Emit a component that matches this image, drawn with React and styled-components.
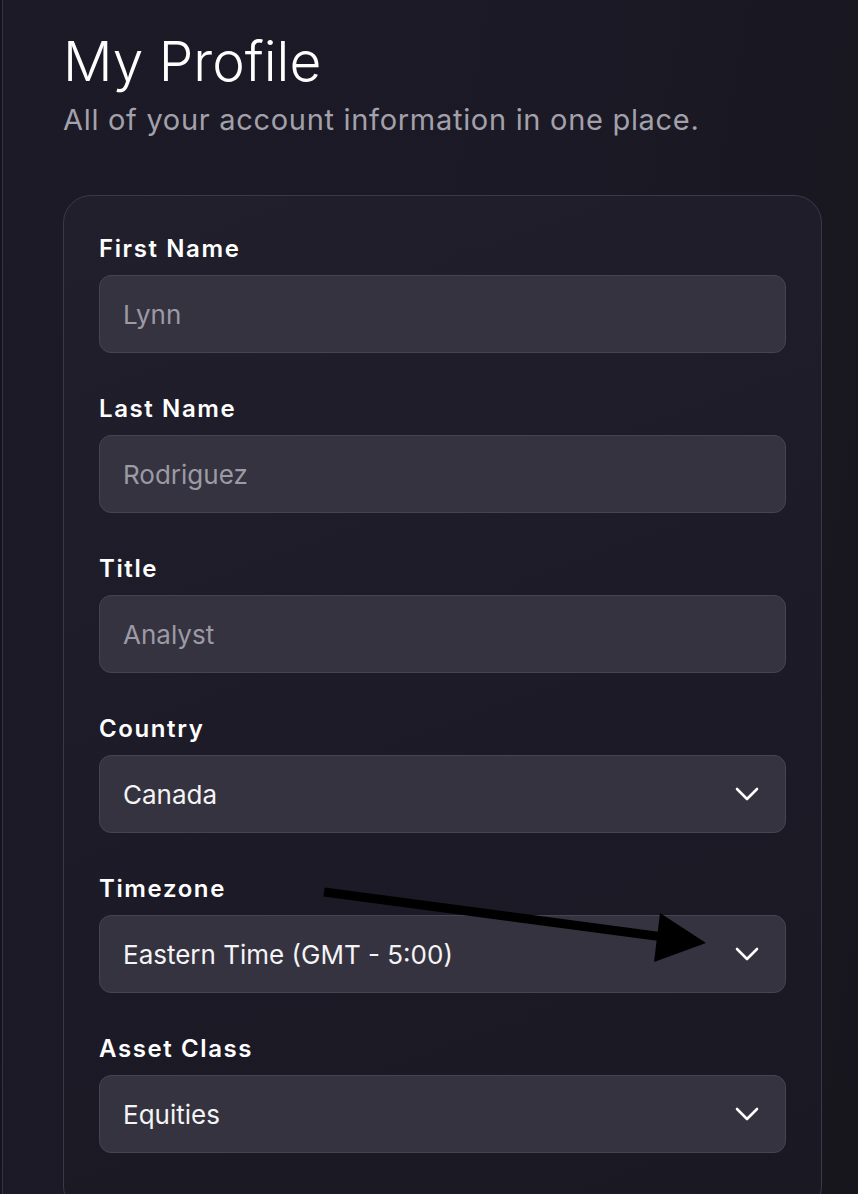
import React from "react";
import styled, { createGlobalStyle } from "styled-components";

const GlobalStyle = createGlobalStyle`
    html, body {
        margin: 0;
        padding: 0;
        background: #15141b;
    }
    body {
        font-family: Inter, "Noto Sans", sans-serif;
        -webkit-font-smoothing: antialiased;
    }
`

const Page = styled.div`
    position: relative;
    min-height: 1194px;
    margin-left: 2px;
    border-left: 1px solid #353341;
    background: linear-gradient(100deg, #1c1a27 0%, #1b1925 55%, #17161d 100%);
    padding: 28px 36px 0 60px;
    box-sizing: border-box;
`

const Title = styled.h1`
    margin: 0;
    font-size: 55px;
    font-weight: 300;
    line-height: 66px;
    color: #ffffff;
`

const Subtitle = styled.p`
    margin: 8px 0 0;
    font-size: 29px;
    font-weight: 400;
    line-height: 36px;
    letter-spacing: 0.7px;
    color: #a3a1aa;
`

const Card = styled.div`
    margin-top: 57px;
    border: 1px solid #3b3947;
    border-radius: 28px;
    background: linear-gradient(160deg, #211f2c 0%, #1c1a26 60%, #1a1822 100%);
    padding: 38px 35px 60px;
    display: flex;
    flex-direction: column;
    gap: 41px;
`

const Field = styled.div`
    display: flex;
    flex-direction: column;
    gap: 11px;
`

const Label = styled.label`
    font-size: 24px;
    font-weight: 600;
    line-height: 30px;
    letter-spacing: 1.6px;
    color: #ffffff;
`

const Box = styled.div`
    height: 78px;
    box-sizing: border-box;
    border: 1px solid #464452;
    border-radius: 12px;
    background: #35333f;
    padding: 0 26px 0 23px;
    display: flex;
    align-items: center;
    justify-content: space-between;
    font-size: 26px;
    color: ${p => (p.$placeholder ? "#9c9aa4" : "#f4f4f6")};
`

const Chevron = () => (
    <svg width="24" height="14" viewBox="0 0 24 14" fill="none">
        <polyline points="2,2 12,12 22,2" stroke="#ffffff" strokeWidth="2.6" strokeLinecap="round" strokeLinejoin="round" />
    </svg>
)

const Arrow = styled.svg`
    position: absolute;
    left: 0;
    top: 0;
    pointer-events: none;
`

const fields = [
    { label: "First Name", value: "Lynn", placeholder: true },
    { label: "Last Name", value: "Rodriguez", placeholder: true },
    { label: "Title", value: "Analyst", placeholder: true },
    { label: "Country", value: "Canada", select: true },
    { label: "Timezone", value: "Eastern Time (GMT - 5:00)", select: true },
    { label: "Asset Class", value: "Equities", select: true },
]

const App = () => {
    return (
        <Page>
            <GlobalStyle />
            <Title>My Profile</Title>
            <Subtitle>All of your account information in one place.</Subtitle>
            <Card>
                {fields.map(f => (
                    <Field key={f.label}>
                        <Label>{f.label}</Label>
                        <Box $placeholder={f.placeholder}>
                            <span>{f.value}</span>
                            {f.select ? <Chevron /> : null}
                        </Box>
                    </Field>
                ))}
            </Card>
            {/* annotation arrow */}
            <Arrow width="858" height="1194" viewBox="0 0 858 1194">
                <line x1="321" y1="892" x2="668" y2="938" stroke="#000" strokeWidth="9" />
                <polygon points="657,913 703,943 651,962" fill="#000" />
            </Arrow>
        </Page>
    )
}

export default App;
